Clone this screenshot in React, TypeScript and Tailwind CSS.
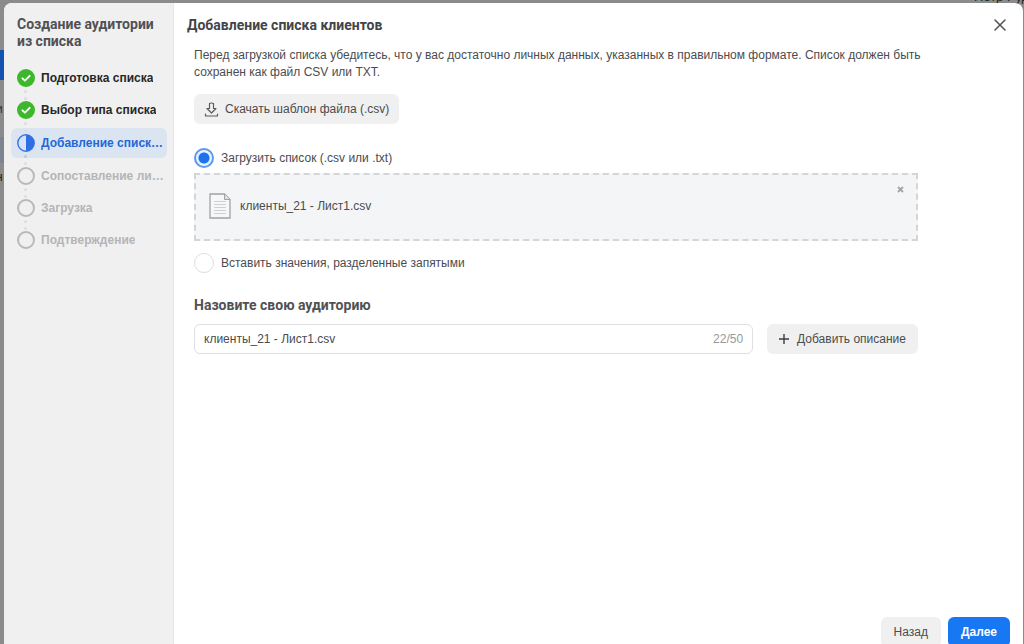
import React, { useState } from 'react';

type StepState = 'done' | 'current' | 'todo';

const steps: { title: string; state: StepState }[] = [
  { title: 'Подготовка списка', state: 'done' },
  { title: 'Выбор типа списка', state: 'done' },
  { title: 'Добавление списка клиентов', state: 'current' },
  { title: 'Сопоставление личных данных', state: 'todo' },
  { title: 'Загрузка', state: 'todo' },
  { title: 'Подтверждение', state: 'todo' },
];

const MAX_NAME = 50;
const FILE_NAME = 'клиенты_21 - Лист1.csv';

const textColor: Record<StepState, string> = {
  done: 'text-[#262729]',
  current: 'text-[#2268d8]',
  todo: 'text-[#b4b5b7]',
};

const StepIcon: React.FC<{ state: StepState }> = ({ state }) => (
  <svg className="size-[18px]" viewBox="0 0 18 18" fill="none" aria-hidden="true">
    {state === 'done' && (
      <>
        <circle cx="9" cy="9" r="9" fill="#3db72c" />
        <path d="M5.4 9.3l2.5 2.4 4.8-4.9" stroke="#fff" strokeWidth="1.8" strokeLinecap="round" strokeLinejoin="round" />
      </>
    )}
    {state === 'current' && (
      <>
        <circle cx="9" cy="9" r="8.2" fill="#d5e3f8" stroke="#3b77e6" strokeWidth="1.5" />
        <path d="M9 0.8a8.2 8.2 0 0 1 0 16.4z" fill="#2f6fe4" />
      </>
    )}
    {state === 'todo' && <circle cx="9" cy="9" r="8" stroke="#b7b8ba" strokeWidth="2" />}
  </svg>
);

const Step: React.FC<{ title: string; state: StepState; last: boolean }> = ({ title, state, last }) => (
  <li
    className={`flex h-[30px] items-center gap-1.5 rounded-md pr-0.5 pl-1.5 ${state === 'current' ? 'my-px bg-[#dbe5f2]' : ''}`}
    aria-current={state === 'current' ? 'step' : undefined}
  >
    <span className="relative shrink-0">
      <StepIcon state={state} />
      {!last && (
        <span className="absolute top-[21px] left-[7px] flex flex-col gap-1">
          <span className={`size-[3px] rounded-full ${state === 'current' ? 'bg-[#c3c9d2]' : 'bg-[#dcddde]'}`} />
          <span className="size-[3px] rounded-full bg-[#dcddde]" />
        </span>
      )}
    </span>
    <span className={`truncate text-xs font-bold ${textColor[state]}`}>{title}</span>
  </li>
);

const FileIcon = () => (
  <svg className="h-[26px] w-[22px] shrink-0" viewBox="0 0 22 26" fill="none" aria-hidden="true">
    <path d="M1 1h14.5L21 6.500V25H1z" fill="#f7f7f7" stroke="#a0a1a3" strokeWidth="1.3" />
    <path d="M15.500 1v5.500H21" fill="#dedfe0" stroke="#a0a1a3" />
    <path d="M5 8.500h12M5 11.500h12M5 14.500h12M5 17.500h12M5 20.500h12" stroke="#cfd0d2" />
  </svg>
);

const radioClass =
  'size-5 shrink-0 appearance-none rounded-full border border-[#dcdee1] bg-white checked:border-2 checked:border-[#5c98f6] checked:bg-[radial-gradient(circle,#1b74ee_5px,#e8f1fe_6px)]';

// What is left visible of the page under the dialog
const PageBehind = () => (
  <div className="absolute inset-0 overflow-hidden bg-[#8b8b8b]" aria-hidden="true">
    <span className="absolute top-[50px] left-0 h-[30px] w-1 bg-[#1254b0]" />
    <span className="absolute top-[137px] left-0 h-[26px] w-1 bg-[#7d848f]" />
    <span className="absolute top-[101px] -left-1 text-xs text-[#333]">и</span>
    <span className="absolute top-[169px] -left-1 text-xs text-[#222]">н</span>
    <span className="absolute -top-3 right-0 w-[50px] overflow-hidden text-[13px] whitespace-nowrap text-[#222]">Петр Руденко</span>
  </div>
);

const App: React.FC = () => {
  const [source, setSource] = useState('file');
  const [file, setFile] = useState<string | null>(FILE_NAME);
  const [name, setName] = useState(FILE_NAME);

  return (
    <div className="relative flex h-screen overflow-hidden pt-[3px] pr-px pl-1 font-['Liberation_Sans',Arial,sans-serif] text-xs text-[#4b4c4f]">
      <PageBehind />
      <div role="dialog" aria-labelledby="dialog-title" className="relative flex flex-1 overflow-hidden rounded-t-lg bg-white">
        <aside className="w-[170px] shrink-0 border-r border-[#e6e6e6] bg-[#f0f0f0] pt-[13px] pr-1.5 pl-[7px]">
          <h2 className="px-1.5 font-['Roboto',sans-serif] text-sm leading-[17px] font-bold text-[#505154]">Создание аудитории из списка</h2>
          <ol className="mt-[13px] flex flex-col gap-0.5">
            {steps.map((step, i) => (
              <Step key={step.title} {...step} last={i === steps.length - 1} />
            ))}
          </ol>
        </aside>

        <div className="flex min-w-0 flex-1 flex-col">
          <header className="flex h-11 items-center justify-between pr-[15px] pl-[13px]">
            <h1 id="dialog-title" className="font-['Roboto',sans-serif] text-sm font-bold text-[#434447]">
              Добавление списка клиентов
            </h1>
            <button aria-label="Закрыть" className="flex size-4 items-center justify-center">
              <svg className="size-3" viewBox="0 0 12 12" stroke="#505154" strokeWidth="1.5" strokeLinecap="round">
                <path d="M1 1l10 10M11 1L1 11" />
              </svg>
            </button>
          </header>

          <main className="w-full max-w-[764px] flex-1 px-5">
            <p className="-mr-2.5 leading-[17px]">
              Перед загрузкой списка убедитесь, что у вас достаточно личных данных, указанных в правильном формате. Список должен быть сохранен как файл CSV или TXT.
            </p>

            <button className="mt-[13px] flex h-[30px] items-center gap-1.5 rounded-md bg-[#f0f0f0] px-2.5">
              <svg className="size-[15px]" viewBox="0 0 15 15" fill="none" stroke="#5c5d60" strokeWidth="1.2" strokeLinejoin="round" strokeLinecap="round">
                <path d="M5.500 1.500q2-1 4 0v5h2.500L7.500 11 3 6.500h2.500zM1.500 12v2h12v-2" />
              </svg>
              Скачать шаблон файла (.csv)
            </button>

            <label className="mt-6 flex h-5 items-center gap-[7px]">
              <input type="radio" name="source" className={radioClass} checked={source === 'file'} onChange={() => setSource('file')} />
              Загрузить список (.csv или .txt)
            </label>

            <div className="mt-[5px] flex h-[68px] items-start justify-between border-2 border-dashed border-[#d4d5d7] bg-[#f4f5f7] pr-3 pl-[13px]">
              {file && (
                <>
                  <div className="flex h-full items-center gap-[9px] pb-0.5">
                    <FileIcon />
                    <span>{file}</span>
                  </div>
                  <button aria-label="Удалить файл" className="mt-[11px]" onClick={() => setFile(null)}>
                    <svg className="size-[7px]" viewBox="0 0 7 7" stroke="#a2a4a7" strokeWidth="1.8">
                      <path d="M1 1l5 5M6 1L1 6" />
                    </svg>
                  </button>
                </>
              )}
            </div>

            <label className="mt-3 flex h-5 items-center gap-[7px]">
              <input type="radio" name="source" className={radioClass} checked={source === 'paste'} onChange={() => setSource('paste')} />
              Вставить значения, разделенные запятыми
            </label>

            <label htmlFor="audience-name" className="mt-6 block font-['Roboto',sans-serif] text-sm leading-[17px] font-bold text-[#505154]">
              Назовите свою аудиторию
            </label>
            <div className="mt-[10px] flex gap-3.5">
              <div className="flex h-[30px] min-w-0 flex-1 items-center rounded-md border border-[#dddfe2] px-[9px]">
                <input
                  id="audience-name"
                  type="text"
                  maxLength={MAX_NAME}
                  value={name}
                  onChange={(e) => setName(e.target.value)}
                  className="min-w-0 flex-1 outline-none"
                />
                <span className="text-[#97999c]">{name.length}/{MAX_NAME}</span>
              </div>
              <button className="flex h-[30px] items-center gap-2 rounded-md bg-[#f0f0f0] px-3">
                <svg className="size-2.5" viewBox="0 0 10 10" stroke="#3c3d40" strokeWidth="1.4">
                  <path d="M5 0v10M0 5h10" />
                </svg>
                Добавить описание
              </button>
            </div>
          </main>

          <footer className="-mb-[3px] flex shrink-0 justify-end gap-[7px] pr-[13px]">
            <button className="h-[30px] rounded-md bg-[#f0f0f0] px-[13px]">Назад</button>
            <button className="h-[30px] rounded-md bg-[#1877f2] px-[13px] font-bold text-white">Далее</button>
          </footer>
        </div>
      </div>
    </div>
  );
};

export default App;
